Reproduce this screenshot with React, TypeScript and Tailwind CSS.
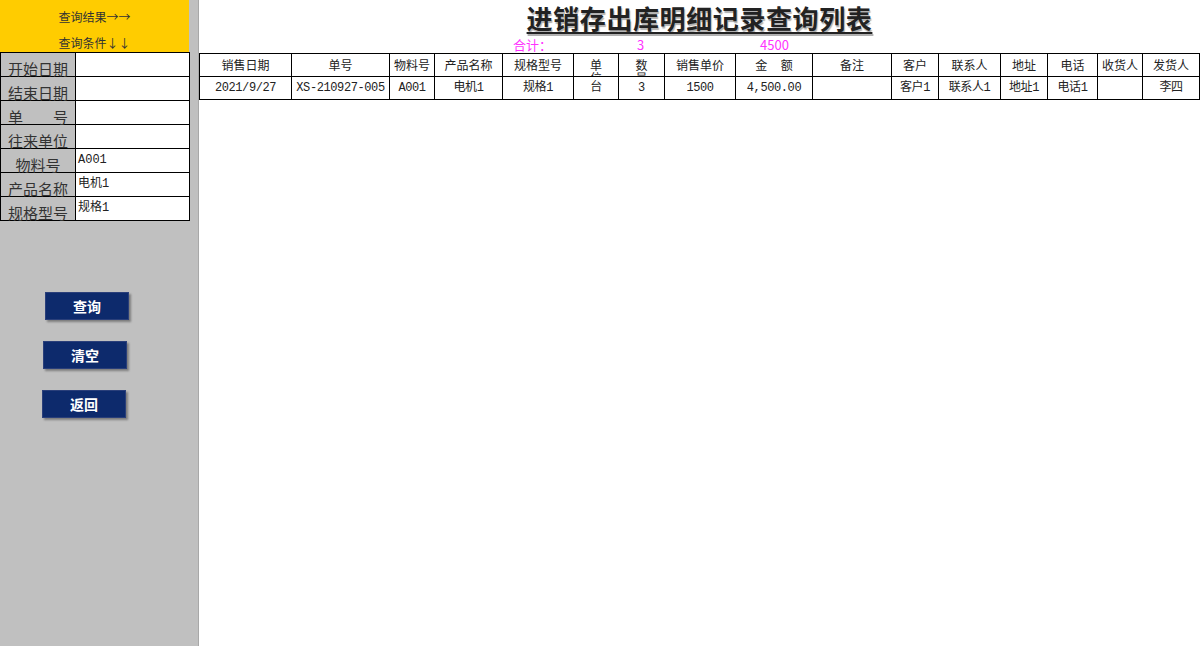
const cols = [92, 98, 45, 68, 71, 45, 46, 71, 77, 79, 47, 62, 47, 50, 45, 57];

const headers: React.ReactNode[] = [
  "销售日期",
  "单号",
  "物料号",
  "产品名称",
  "规格型号",
  <>单<br />位</>,
  <>数<br />量</>,
  "销售单价",
  <>金&nbsp;&nbsp;&nbsp;&nbsp;&nbsp;额</>,
  "备注",
  "客户",
  "联系人",
  "地址",
  "电话",
  "收货人",
  "发货人",
];

const row = [
  "2021/9/27",
  "XS-210927-005",
  "A001",
  "电机1",
  "规格1",
  "台",
  "3",
  "1500",
  "4,500.00",
  "",
  "客户1",
  "联系人1",
  "地址1",
  "电话1",
  "",
  "李四",
];

const fields: { label: string; value: string; kind?: "spread" | "center" }[] = [
  { label: "开始日期", value: "" },
  { label: "结束日期", value: "" },
  { label: "单号", value: "", kind: "spread" },
  { label: "往来单位", value: "" },
  { label: "物料号", value: "A001", kind: "center" },
  { label: "产品名称", value: "电机1" },
  { label: "规格型号", value: "规格1" },
];

function NavButton({ text, offset }: { text: string; offset: string }) {
  return (
    <button
      className={`${offset} w-[84px] h-[28px] bg-[#0d2a6c] text-white text-[14px] font-bold shadow-[2px_2px_2px_rgba(0,0,0,0.35)] border border-[#2a3f7a]`}
    >
      {text}
    </button>
  );
}

export default function App() {
  return (
    <div
      className="flex h-[646px] w-[1200px] overflow-hidden bg-white text-[#222]"
      style={{ fontFamily: '"Noto Sans CJK SC", "Liberation Sans", sans-serif' }}
    >
      {/* left query panel */}
      <div className="w-[199px] shrink-0 bg-[#c0c0c0] border-r border-[#a8a8a8] flex flex-col">
        <div className="w-[189px] h-[52px] bg-[#ffcc00] flex flex-col items-center text-[12px] text-[#333]">
          <div className="mt-[8px] leading-[18px]">查询结果→→</div>
          <div className="mt-[8px] leading-[18px]">查询条件↓↓</div>
        </div>
        <div className="w-[190px] border-t border-black">
          {fields.map((f) => (
            <div key={f.label} className="flex h-[24px] border-b border-l border-r border-black">
              <div className="w-[75px] shrink-0 border-r border-black bg-[#c0c0c0] text-[15px] leading-none text-[#333] flex items-end px-[7px]">
                {f.kind === "spread" ? (
                  <div className="flex w-full justify-between">
                    <span>单</span>
                    <span>号</span>
                  </div>
                ) : f.kind === "center" ? (
                  <div className="w-full text-center">{f.label}</div>
                ) : (
                  f.label
                )}
              </div>
              <div
                className="flex-1 bg-white text-[12px] pl-[2px] pt-[4px] leading-[14px]"
                style={{ fontFamily: '"Liberation Mono", "Noto Sans CJK SC", monospace' }}
              >
                {f.value}
              </div>
            </div>
          ))}
        </div>
        <div className="flex flex-col items-start mt-[71px] gap-[21px]">
          <NavButton text="查询" offset="ml-[45px]" />
          <NavButton text="清空" offset="ml-[43px]" />
          <NavButton text="返回" offset="ml-[42px]" />
        </div>
      </div>

      {/* result area */}
      <div className="flex-1 flex flex-col">
        <div className="h-[36px] flex justify-center">
          <h1 className="mt-[4px] text-[26px] leading-[28px] font-semibold tracking-[0.6px] underline decoration-[2px] underline-offset-[3px] [text-shadow:1px_2px_1px_#b0b0b0]">
            进销存出库明细记录查询列表
          </h1>
        </div>
        <div className="h-[17px] flex items-center text-[13px] leading-none text-[#ff33ff] pl-[314px]">
          <span className="w-[124px]">合计：</span>
          <span className="w-[123px]">3</span>
          <span>4500</span>
        </div>
        <table className="border-collapse table-fixed w-[1001px] text-[12px] text-[#222]">
          <colgroup>
            {cols.map((w, i) => (
              <col key={i} style={{ width: w }} />
            ))}
          </colgroup>
          <thead>
            <tr className="h-[23px]">
              {headers.map((h, i) => (
                <th key={i} className="border border-black font-normal p-0 align-top">
                  <div className="h-[22px] overflow-hidden leading-[13px] pt-[4px] text-center">
                    {typeof h === "string" ? <span className="leading-[14px]">{h}</span> : h}
                  </div>
                </th>
              ))}
            </tr>
          </thead>
          <tbody>
            <tr className="h-[23px]">
              {row.map((c, i) => (
                <td
                  key={i}
                  className="border border-black p-0 text-center leading-[22px] whitespace-nowrap overflow-hidden tracking-[-0.4px]"
                  style={{ fontFamily: '"Liberation Mono", "Noto Sans CJK SC", monospace' }}
                >
                  {c}
                </td>
              ))}
            </tr>
          </tbody>
        </table>
      </div>
    </div>
  );
}
